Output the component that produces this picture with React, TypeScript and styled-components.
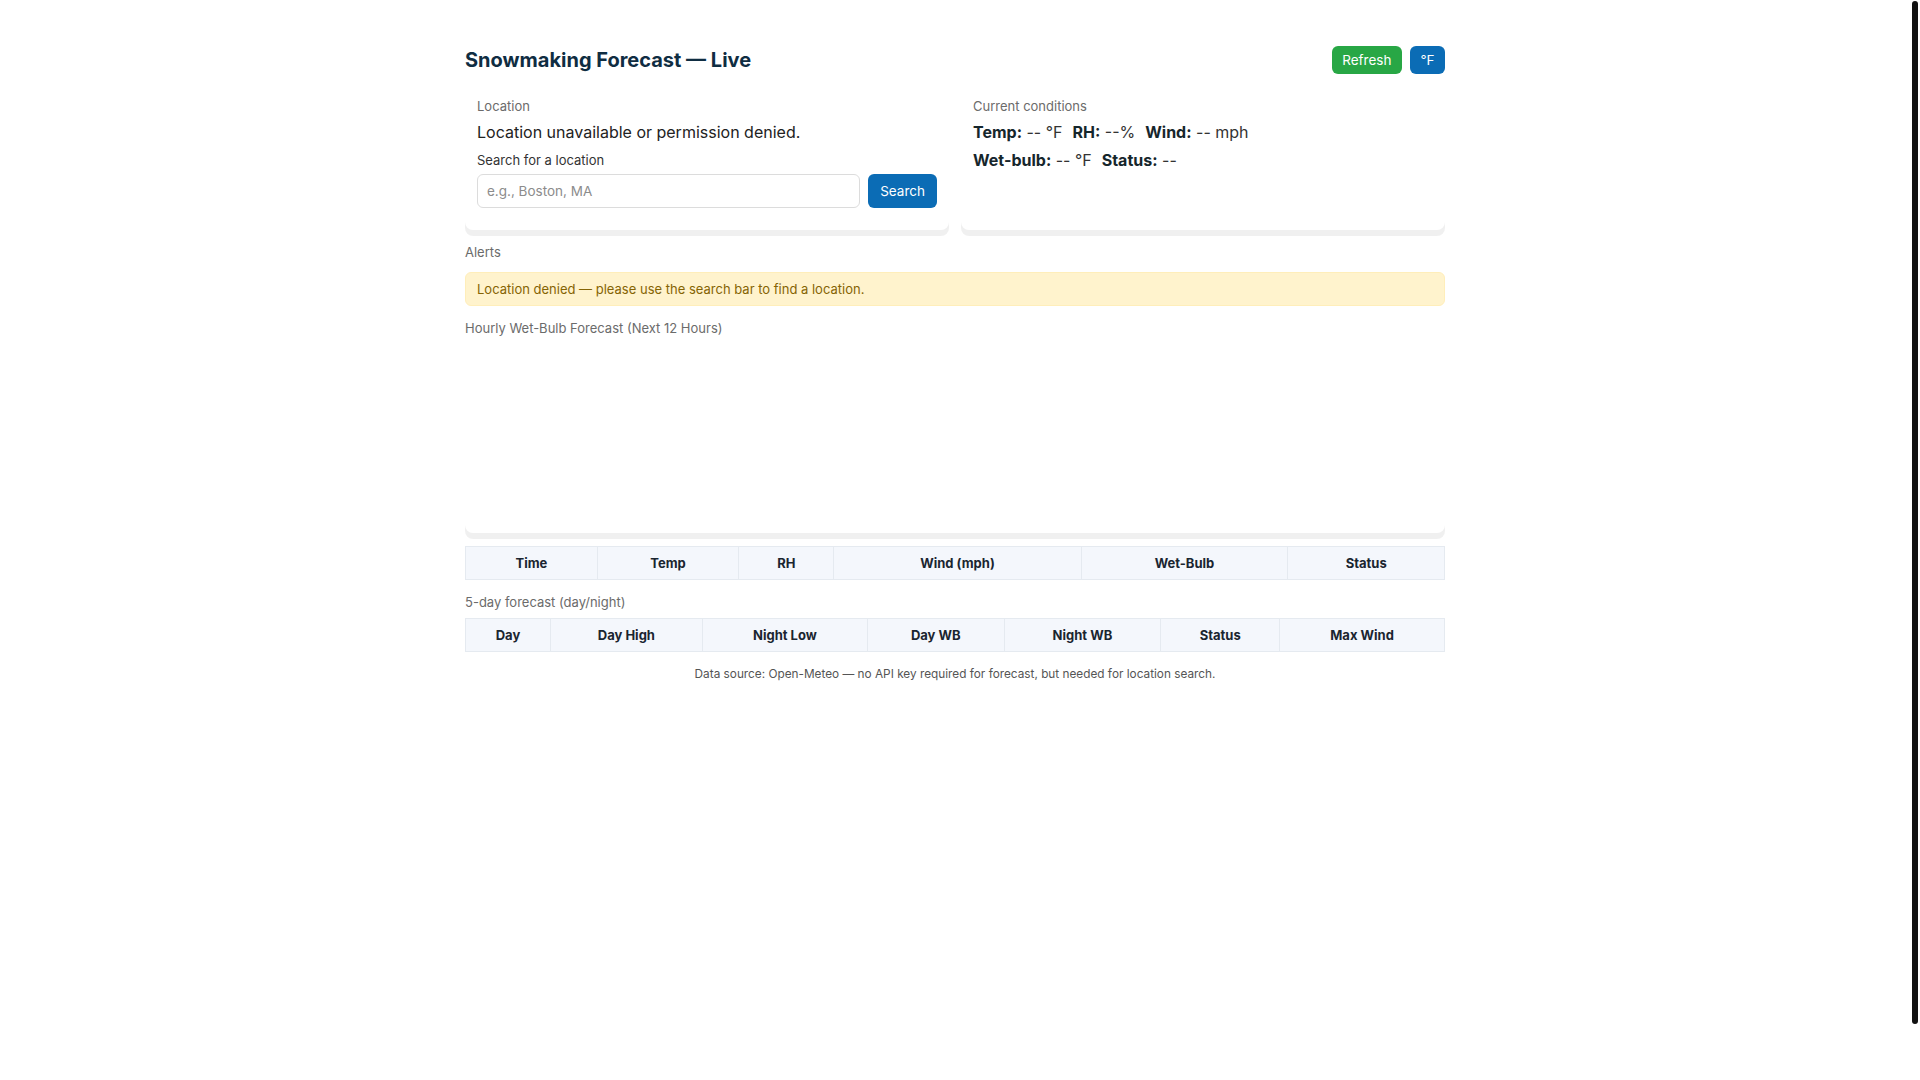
import React from "react";
import styled, { createGlobalStyle } from "styled-components";

const GlobalStyle = createGlobalStyle`
  html, body { margin: 0; height: 100%; overflow: hidden; }
  body {
    background: #ffffff;
    color: #222222;
    font-family: Inter, "Noto Sans", "Liberation Sans", sans-serif;
  }
  * { box-sizing: border-box; }
`;

const Scroller = styled.div`
  height: 100vh;
  overflow-y: auto;
  padding-right: 10px;
  scrollbar-width: none;
  &::-webkit-scrollbar { display: none; }
`;

const ScrollThumb = styled.div`
  position: fixed;
  top: 1px;
  right: 2px;
  width: 6px;
  height: 1023px;
  border-radius: 3px;
  background: #111111;
  pointer-events: none;
`;

const Page = styled.div`
  box-sizing: content-box;
  min-height: 100vh;
  padding: 28px;
`;

const Container = styled.div`
  max-width: 980px;
  margin: 0 auto;
  padding-top: 18px;
`;

const Header = styled.header`
  display: flex;
  align-items: center;
  justify-content: space-between;
  height: 28px;
  margin-bottom: 12px;
`;

const Title = styled.h1`
  margin: 0;
  font-size: 20px;
  font-weight: 700;
  color: #0f2d42;
  line-height: 24px;
`;

const Actions = styled.div`
  display: flex;
  gap: 8px;
`;

const Button = styled.button<{ $variant: "green" | "blue"; $tall?: boolean }>`
  height: ${(p) => (p.$tall ? "34px" : "28px")};
  padding: 0 ${(p) => (p.$tall ? "12px" : "10.5px")};
  border: none;
  border-radius: 6px;
  font-family: inherit;
  font-size: 13.5px;
  color: #ffffff;
  background: ${(p) => (p.$variant === "green" ? "#28a745" : "#0b6cb5")};
  cursor: pointer;
`;

const Grid = styled.div`
  display: grid;
  grid-template-columns: 1fr 1fr;
  gap: 12px;
`;

const Card = styled.section`
  background: #ffffff;
  border-radius: 8px;
  padding: 12px;
  box-shadow: 0 6px 0 rgba(0, 0, 0, 0.06);
`;

const CardLabel = styled.div`
  font-size: 13px;
  line-height: 16px;
  color: #6b6b6b;
`;

const BodyText = styled.div`
  margin-top: 8px;
  font-size: 16px;
  line-height: 20px;
  color: #222222;
`;

const FieldLabel = styled.label`
  display: block;
  margin-top: 10px;
  font-size: 13px;
  line-height: 16px;
  color: #333333;
`;

const SearchRow = styled.div`
  display: flex;
  gap: 8px;
  margin-top: 6px;
  margin-bottom: 10px;
`;

const Input = styled.input`
  flex: 1;
  height: 34px;
  padding: 0 9px;
  border: 1px solid #dcdcdc;
  border-radius: 6px;
  font-family: inherit;
  font-size: 13.5px;
  color: #222;
  &::placeholder { color: #8c8c8c; }
`;

const StatLine = styled.div`
  display: flex;
  gap: 10px;
  margin-top: 8px;
  font-size: 16px;
  line-height: 20px;
  color: #333333;
`;

const Stat = styled.span`
  b { font-weight: 700; color: #16262c; }
`;

const SectionLabel = styled.div<{ $after?: number }>`
  margin-top: 14px;
  margin-bottom: ${(p) => p.$after ?? 12}px;
  font-size: 13px;
  line-height: 16px;
  color: #6b6b6b;
`;

const Alert = styled.div`
  padding: 8px 11px;
  border: 1px solid #ffeeba;
  border-radius: 6px;
  background: #fff3cd;
  color: #856404;
  font-size: 13px;
  line-height: 16px;
`;

const ChartCard = styled(Card)`
  height: 189px;
`;

const Table = styled.table<{ $gap: number }>`
  width: 100%;
  margin-top: ${(p) => p.$gap}px;
  border-collapse: collapse;
`;

const Th = styled.th`
  padding: 8px;
  border: 1px solid #e5eaf0;
  background: #f4f7fc;
  font-size: 13px;
  line-height: 16px;
  font-weight: 700;
  color: #1a2530;
  text-align: center;
`;

const Footer = styled.div`
  margin-top: 15px;
  text-align: center;
  font-size: 11.8px;
  line-height: 15px;
  color: #555555;
`;

const hourlyCols = ["Time", "Temp", "RH", "Wind (mph)", "Wet-Bulb", "Status"];
const dailyCols = ["Day", "Day High", "Night Low", "Day WB", "Night WB", "Status", "Max Wind"];

export default function App() {
  return (
    <>
      <GlobalStyle />
      <Scroller>
        <Page>
          <Container>
            <Header>
              <Title>Snowmaking Forecast — Live</Title>
              <Actions>
                <Button $variant="green">Refresh</Button>
                <Button $variant="blue">°F</Button>
              </Actions>
            </Header>

            <Grid>
              <Card>
                <CardLabel>Location</CardLabel>
                <BodyText>Location unavailable or permission denied.</BodyText>
                <FieldLabel htmlFor="loc">Search for a location</FieldLabel>
                <SearchRow>
                  <Input id="loc" placeholder="e.g., Boston, MA" />
                  <Button $variant="blue" $tall>Search</Button>
                </SearchRow>
              </Card>
              <Card>
                <CardLabel>Current conditions</CardLabel>
                <StatLine>
                  <Stat><b>Temp:</b> -- °F</Stat>
                  <Stat><b>RH:</b> --%</Stat>
                  <Stat><b>Wind:</b> -- mph</Stat>
                </StatLine>
                <StatLine>
                  <Stat><b>Wet-bulb:</b> -- °F</Stat>
                  <Stat><b>Status:</b> --</Stat>
                </StatLine>
              </Card>
            </Grid>

            <SectionLabel>Alerts</SectionLabel>
            <Alert>Location denied — please use the search bar to find a location.</Alert>

            <SectionLabel $after={8}>Hourly Wet-Bulb Forecast (Next 12 Hours)</SectionLabel>
            <ChartCard />

            <Table $gap={13}>
              <thead>
                <tr>{hourlyCols.map((c) => <Th key={c}>{c}</Th>)}</tr>
              </thead>
              <tbody />
            </Table>

            <SectionLabel $after={8}>5-day forecast (day/night)</SectionLabel>
            <Table $gap={0}>
              <thead>
                <tr>{dailyCols.map((c) => <Th key={c}>{c}</Th>)}</tr>
              </thead>
              <tbody />
            </Table>

            <Footer>Data source: Open-Meteo — no API key required for forecast, but needed for location search.</Footer>
          </Container>
        </Page>
      </Scroller>
      <ScrollThumb aria-hidden="true" />
    </>
  );
}
